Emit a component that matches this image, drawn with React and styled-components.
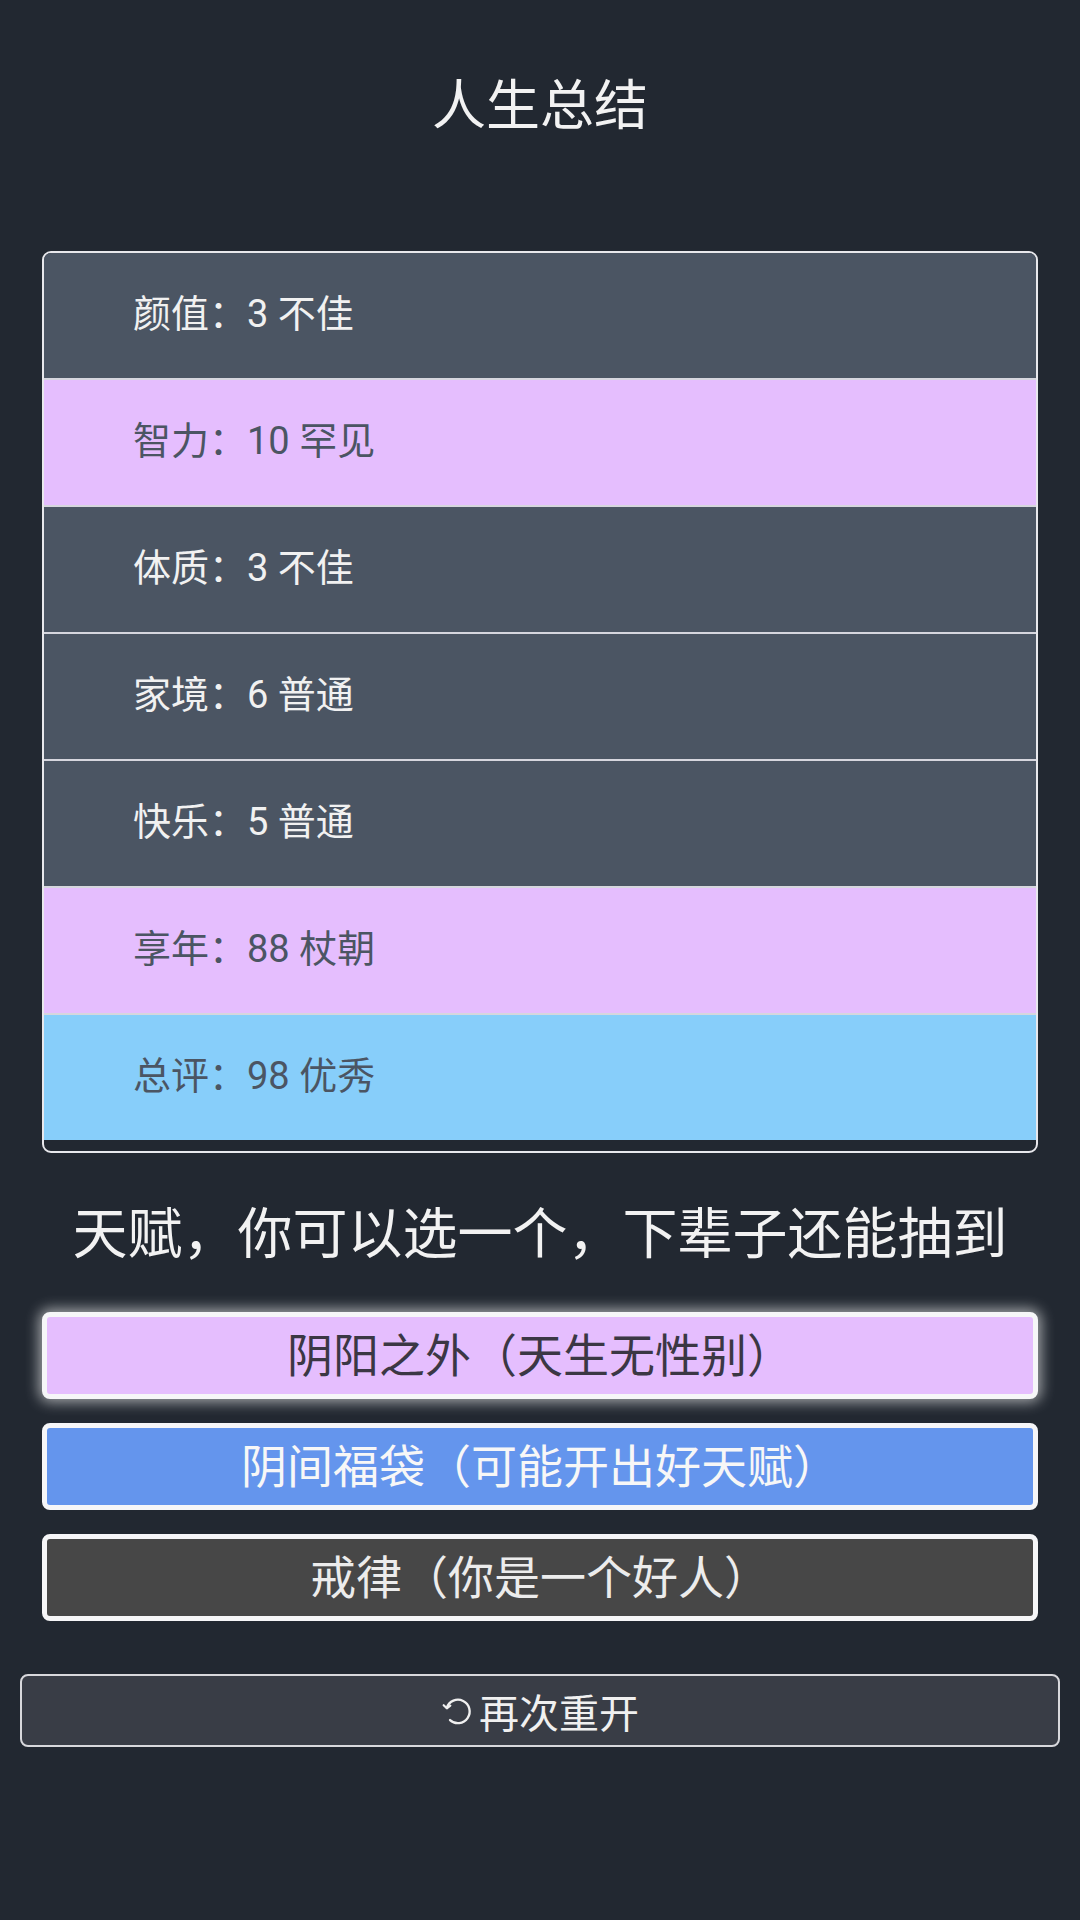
import React from "react";
import styled, { createGlobalStyle, css } from "styled-components";

const GlobalStyle = createGlobalStyle`
  html, body {
    margin: 0;
    padding: 0;
    background: #222831;
  }
  body {
    font-family: Roboto, "Noto Sans CJK SC", "Noto Sans", sans-serif;
    color: #f0f0f0;
  }
  * { box-sizing: border-box; }
`;

const Page = styled.div`
  width: 1080px;
  min-height: 1920px;
  padding: 75px 20px 0;
  background: #222831;
`;

const Title = styled.h1`
  margin: 0;
  font-size: 54px;
  line-height: 64px;
  font-weight: 400;
  text-align: center;
  color: #f2f2f2;
`;

const Content = styled.div`
  margin: 0 22px;
`;

const StatsBox = styled.div`
  margin-top: 112px;
  border: 2px solid #e8e8ec;
  border-radius: 9px;
  overflow: hidden;
  padding-bottom: 11px;
  background: #222831;
`;

const rowThemes = {
  normal: css`
    background: #4b5563;
    color: #f1f1f1;
  `,
  rare: css`
    background: #e5befe;
    color: #4b5563;
  `,
  good: css`
    background: #87cefa;
    color: #4b5563;
  `,
};

const StatRow = styled.div`
  height: 127px;
  display: flex;
  align-items: center;
  padding: 0 0 10px 89px;
  font-size: 38px;
  border-bottom: 2px solid #d6d6de;
  ${(p) => rowThemes[p.$tone]}
  &:last-child {
    border-bottom: none;
    height: 125px;
  }
`;

const Subtitle = styled.h2`
  margin: 49px 0 0;
  font-size: 55px;
  line-height: 64px;
  font-weight: 400;
  text-align: center;
  color: #f2f2f2;
`;

const TalentList = styled.div`
  margin-top: 46px;
  display: flex;
  flex-direction: column;
  gap: 24px;
`;

const talentThemes = {
  purple: css`
    background: #e5befe;
    color: #3b3744;
  `,
  blue: css`
    background: #6495ed;
    color: #f7f7f7;
  `,
  dark: css`
    background: #474747;
    color: #ececec;
  `,
};

const TalentButton = styled.div`
  height: 87px;
  border: 5px solid #f6f6f8;
  border-radius: 8px;
  display: flex;
  align-items: center;
  justify-content: center;
  padding-bottom: 8px;
  font-size: 46px;
  ${(p) => talentThemes[p.$tone]}
  ${(p) =>
    p.$selected &&
    css`
      box-shadow: 0 0 14px 3px rgba(255, 255, 255, 0.6);
    `}
`;

const RestartButton = styled.div`
  margin-top: 53px;
  height: 73px;
  border: 2px solid #d8d8dc;
  border-radius: 8px;
  background: #393d46;
  color: #f0f0f0;
  display: flex;
  align-items: center;
  justify-content: center;
  font-size: 40px;
  gap: 4px;
`;

const RestartIcon = () => (
  <svg width="34" height="34" viewBox="0 0 32 32" fill="none">
    <path
      d="M5.5 13 A11 11 0 1 1 8.5 24.5"
      stroke="#f0f0f0"
      strokeWidth="2.2"
      strokeLinecap="round"
    />
    <path
      d="M2.5 10.5 L5.5 13.5 L8.8 11"
      stroke="#f0f0f0"
      strokeWidth="2"
      strokeLinecap="round"
      strokeLinejoin="round"
    />
  </svg>
);

const stats = [
  { label: "颜值：3 不佳", tone: "normal" },
  { label: "智力：10 罕见", tone: "rare" },
  { label: "体质：3 不佳", tone: "normal" },
  { label: "家境：6 普通", tone: "normal" },
  { label: "快乐：5 普通", tone: "normal" },
  { label: "享年：88 杖朝", tone: "rare" },
  { label: "总评：98 优秀", tone: "good" },
];

const talents = [
  { label: "阴阳之外（天生无性别）", tone: "purple", selected: true },
  { label: "阴间福袋（可能开出好天赋）", tone: "blue" },
  { label: "戒律（你是一个好人）", tone: "dark" },
];

export default function App() {
  return (
    <>
      <GlobalStyle />
      <Page>
        <Title>人生总结</Title>
        <Content>
          <StatsBox>
            {stats.map((s) => (
              <StatRow key={s.label} $tone={s.tone}>
                {s.label}
              </StatRow>
            ))}
          </StatsBox>
          <Subtitle>天赋，你可以选一个，下辈子还能抽到</Subtitle>
          <TalentList>
            {talents.map((t) => (
              <TalentButton key={t.label} $tone={t.tone} $selected={t.selected}>
                {t.label}
              </TalentButton>
            ))}
          </TalentList>
        </Content>
        <RestartButton>
          <RestartIcon />
          再次重开
        </RestartButton>
      </Page>
    </>
  );
}
